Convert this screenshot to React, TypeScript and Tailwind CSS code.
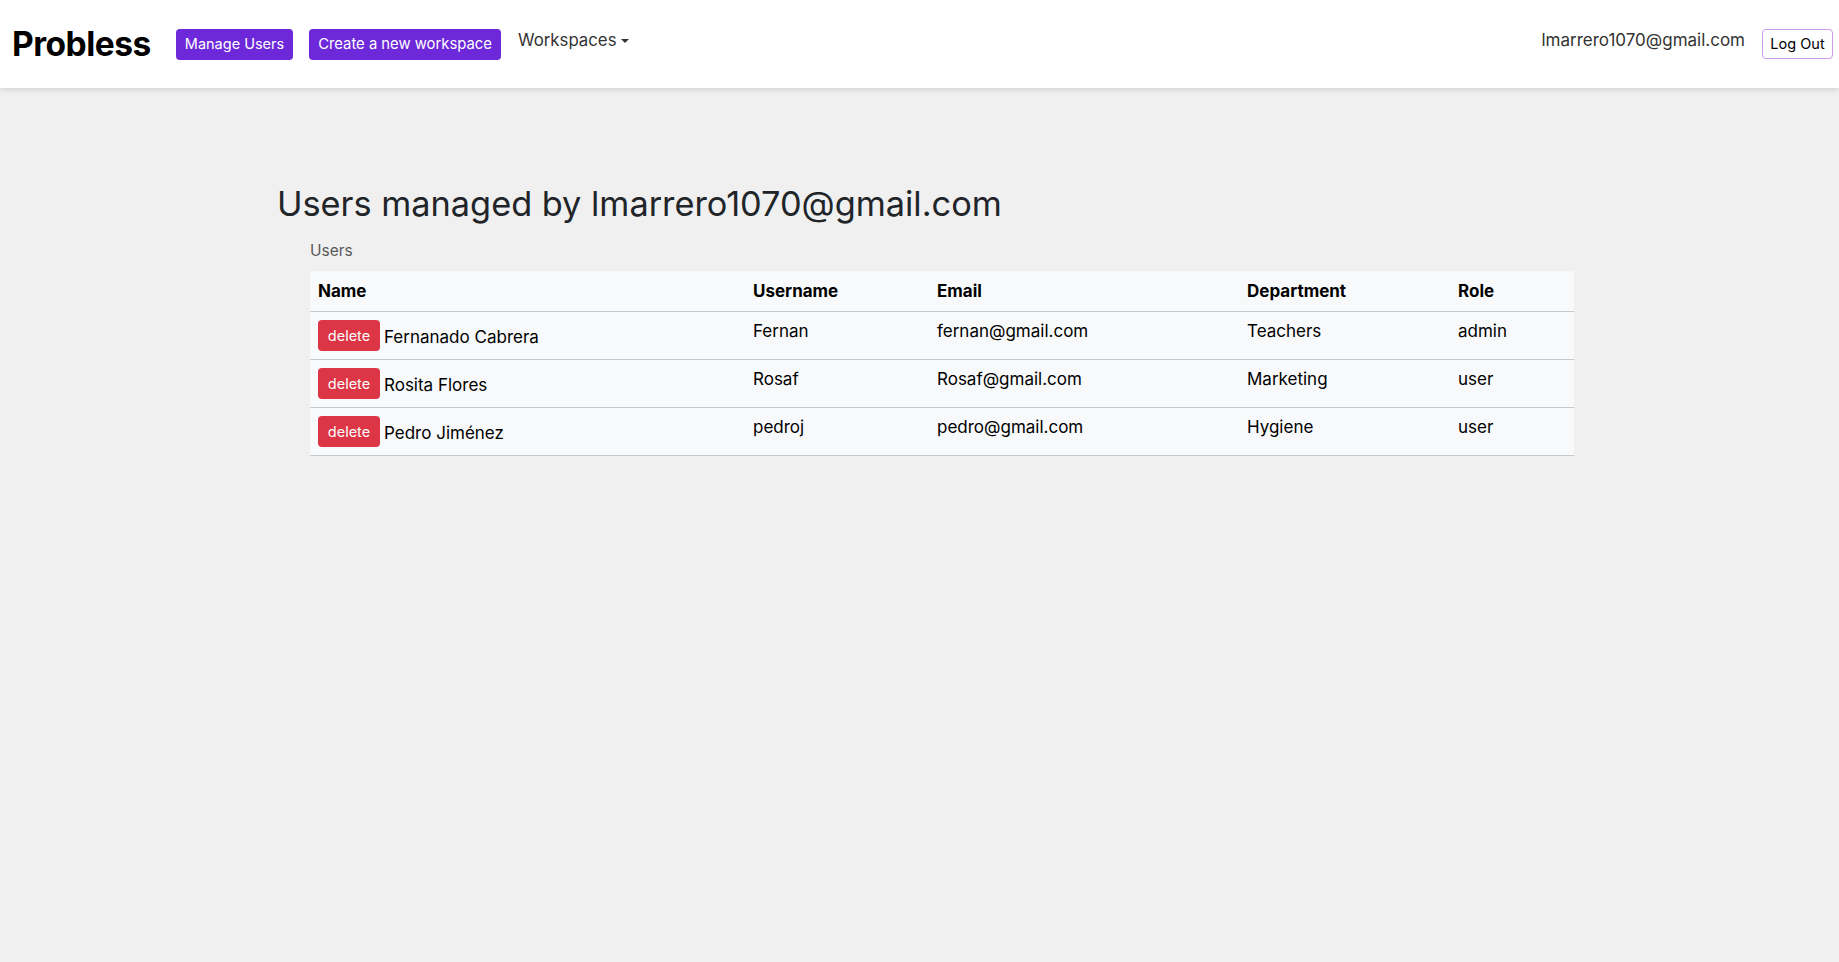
import React from "react";

const users = [
  { name: "Fernanado Cabrera", username: "Fernan", email: "fernan@gmail.com", dept: "Teachers", role: "admin" },
  { name: "Rosita Flores", username: "Rosaf", email: "Rosaf@gmail.com", dept: "Marketing", role: "user" },
  { name: "Pedro Jiménez", username: "pedroj", email: "pedro@gmail.com", dept: "Hygiene", role: "user" },
];

export default function App() {
  return (
    <div className="min-h-[962px] bg-[#f0f0f0] text-[#212529]" style={{ fontFamily: "Inter, 'Noto Sans', sans-serif" }}>
      <nav className="h-[88px] bg-white flex items-center shadow-[0_2px_6px_rgba(0,0,0,0.12)] relative">
        <div className="pl-[12px] w-[176px] shrink-0 text-[33.5px] font-bold text-black tracking-[-0.5px]">Probless</div>
        <button className="w-[117px] h-[31px] rounded-[4px] bg-[#6d28d9] text-white text-[14.5px] shrink-0">Manage Users</button>
        <button className="ml-[16px] w-[192px] h-[31px] rounded-[4px] bg-[#6d28d9] text-white text-[14.8px] shrink-0">Create a new workspace</button>
        <div className="ml-[17px] mb-[7px] flex items-center text-[16.8px] text-[#333]">
          <span>Workspaces</span>
          <span className="ml-[5px] inline-block w-0 h-0 border-l-[4px] border-r-[4px] border-t-[4px] border-l-transparent border-r-transparent border-t-[#333]"></span>
        </div>
        <div className="flex-1"></div>
        <div className="mb-[7px] mr-[17px] text-[17px] text-[#333] shrink-0">lmarrero1070@gmail.com</div>
        <button className="w-[71px] h-[30px] rounded-[4px] border border-[#cf9af2] bg-white text-black text-[14.5px] mr-[6px] shrink-0">Log Out</button>
      </nav>

      <main className="pt-[96px]">
        <h2 className="pl-[277px] text-[34.3px] leading-[40px] font-normal text-[#212529]">Users managed by lmarrero1070@gmail.com</h2>
        <div className="pl-[310px] pr-[265px]">
          <div className="mt-[15px] text-[15.5px] leading-[24px] text-[#595959]">Users</div>
          <table className="mt-[8px] w-[1264px] bg-[#f8f9fa] text-[17px] border-collapse">
            <colgroup>
              <col className="w-[435px]" />
              <col className="w-[184px]" />
              <col className="w-[310px]" />
              <col className="w-[211px]" />
              <col className="w-[124px]" />
            </colgroup>
            <thead>
              <tr className="border-b border-[#c8c8c8]">
                <th className="text-left align-top px-[8px] pt-[8px] pb-[8px] leading-[24px] font-bold text-black">Name</th>
                <th className="text-left align-top px-[8px] pt-[8px] pb-[8px] leading-[24px] font-bold text-black">Username</th>
                <th className="text-left align-top px-[8px] pt-[8px] pb-[8px] leading-[24px] font-bold text-black">Email</th>
                <th className="text-left align-top px-[8px] pt-[8px] pb-[8px] leading-[24px] font-bold text-black">Department</th>
                <th className="text-left align-top px-[8px] pt-[8px] pb-[8px] leading-[24px] font-bold text-black">Role</th>
              </tr>
            </thead>
            <tbody>
              {users.map((u) => (
                <tr key={u.username} className="border-b border-[#c8c8c8]">
                  <td className="align-top px-[8px] py-[8px] text-black">
                    <div className="flex items-center h-[31px]">
                      <button className="w-[62px] h-[31px] rounded-[4px] bg-[#dc3545] text-white text-[14.5px] shrink-0">delete</button>
                      <span className="ml-[4px] mt-[2px] leading-[24px]">{u.name}</span>
                    </div>
                  </td>
                  <td className="align-top px-[8px] pt-[7px] leading-[24px] text-black">{u.username}</td>
                  <td className="align-top px-[8px] pt-[7px] leading-[24px] text-black">{u.email}</td>
                  <td className="align-top px-[8px] pt-[7px] leading-[24px] text-black">{u.dept}</td>
                  <td className="align-top px-[8px] pt-[7px] leading-[24px] text-black">{u.role}</td>
                </tr>
              ))}
            </tbody>
          </table>
        </div>
      </main>
    </div>
  );
}
